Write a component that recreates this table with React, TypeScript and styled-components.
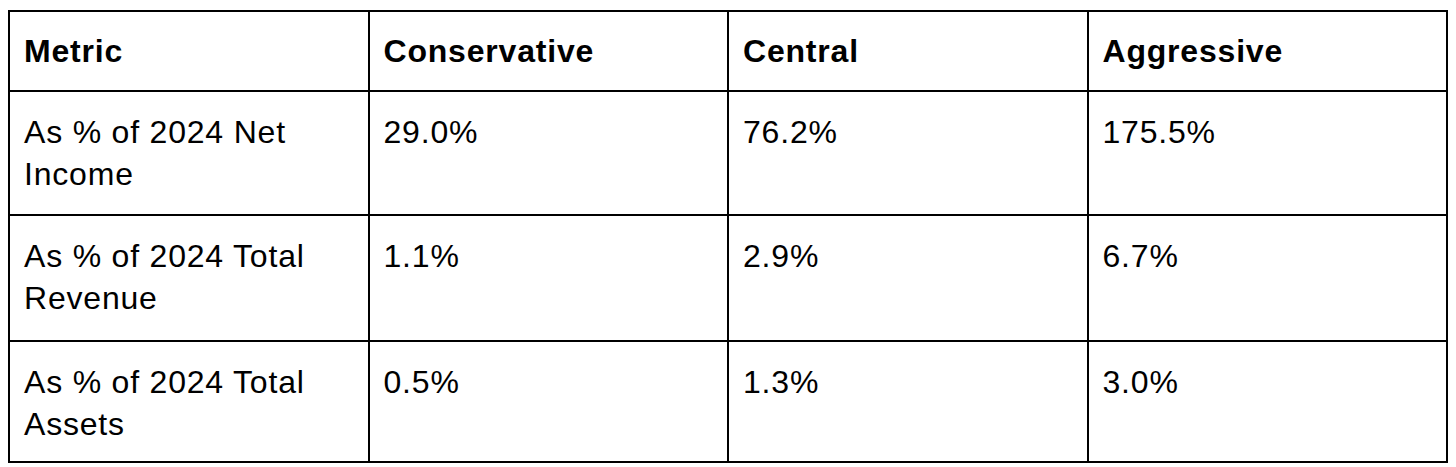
import React, { FC } from 'react'
import styled, { createGlobalStyle } from 'styled-components'

type Row = {
  metric: string
  values: string[]
  height: number
}

const columns = ['Metric', 'Conservative', 'Central', 'Aggressive']

const rows: Row[] = [
  { metric: 'As % of 2024 Net Income', values: ['29.0%', '76.2%', '175.5%'], height: 124 },
  { metric: 'As % of 2024 Total Revenue', values: ['1.1%', '2.9%', '6.7%'], height: 126 },
  { metric: 'As % of 2024 Total Assets', values: ['0.5%', '1.3%', '3.0%'], height: 121 },
]

const GlobalStyle = createGlobalStyle`
  body {
    margin: 0;
    padding: 10px 8px 0;
    background: #fff;
    font-family: 'Liberation Sans', Arial, sans-serif;
    color: #000;
  }
`

const App: FC = () => (
  <>
    <GlobalStyle />
    <Table>
      <colgroup>
        {columns.map((c) => (
          <col key={c} style={{ width: '25%' }} />
        ))}
      </colgroup>
      <thead>
        <tr>
          {columns.map((c) => (
            <HeadCell key={c}>{c}</HeadCell>
          ))}
        </tr>
      </thead>
      <tbody>
        {rows.map((r) => (
          <BodyRow key={r.metric} $height={r.height}>
            <Cell>{r.metric}</Cell>
            {r.values.map((v, i) => (
              <Cell key={i}>{v}</Cell>
            ))}
          </BodyRow>
        ))}
      </tbody>
    </Table>
  </>
)

export default App

const Table = styled.table`
  width: 1440px;
  border-collapse: collapse;
  table-layout: fixed;
  border: 2px solid #000;
`

const HeadCell = styled.th`
  height: 80px;
  box-sizing: border-box;
  border: 2px solid #000;
  padding: 18px 14px 14px;
  text-align: left;
  vertical-align: top;
  font-size: 32px;
  line-height: 42px;
  font-weight: 700;
  letter-spacing: 0.8px;
`

const BodyRow = styled.tr<{ $height: number }>`
  height: ${(p) => p.$height}px;
`

const Cell = styled.td`
  border: 2px solid #000;
  padding: 19px 14px 0;
  text-align: left;
  vertical-align: top;
  font-size: 32px;
  line-height: 42px;
  letter-spacing: 0.8px;
`
